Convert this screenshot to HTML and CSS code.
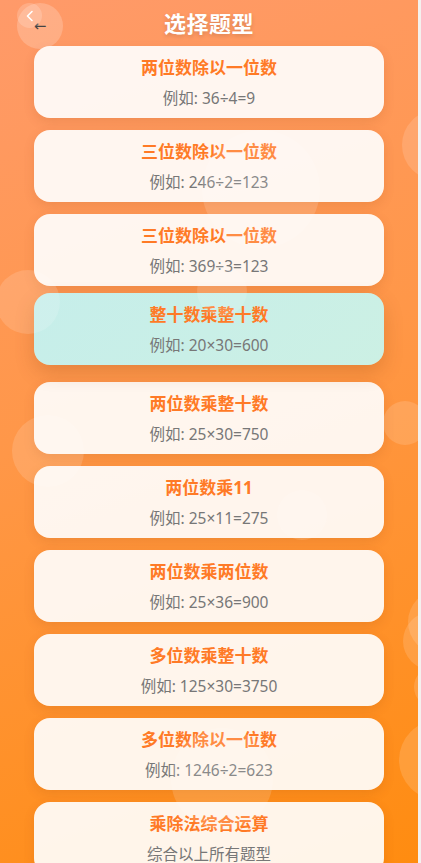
FILE: index.html
```html
<!DOCTYPE html>
<html lang="zh-CN">
<head>
  <meta charset="UTF-8">
  <meta name="viewport" content="width=device-width, initial-scale=1.0">
  <title>选择题型</title>
  <link rel="stylesheet" href="styles.css">
</head>
<body>
  <div class="page">
    <header class="top">
      <button class="back">←</button>
      <span class="nav-bubble">
        <svg width="10" height="12" viewBox="0 0 10 12"><path d="M7 1.5 L2.5 6 L7 10.5" fill="none" stroke="#fff" stroke-width="1.6" stroke-linecap="round" stroke-linejoin="round"/></svg>
      </span>
      <h1>选择题型</h1>
    </header>

    <div class="list">
      <div class="card"><div class="name">两位数除以一位数</div><div class="eg">例如: 36÷4=9</div></div>
      <div class="card"><div class="name">三位数除以一位数</div><div class="eg">例如: 246÷2=123</div></div>
      <div class="card"><div class="name">三位数除以一位数</div><div class="eg">例如: 369÷3=123</div></div>
      <div class="card active"><div class="name">整十数乘整十数</div><div class="eg">例如: 20×30=600</div></div>
      <div class="card"><div class="name">两位数乘整十数</div><div class="eg">例如: 25×30=750</div></div>
      <div class="card"><div class="name">两位数乘11</div><div class="eg">例如: 25×11=275</div></div>
      <div class="card"><div class="name">两位数乘两位数</div><div class="eg">例如: 25×36=900</div></div>
      <div class="card"><div class="name">多位数乘整十数</div><div class="eg">例如: 125×30=3750</div></div>
      <div class="card"><div class="name">多位数除以一位数</div><div class="eg">例如: 1246÷2=623</div></div>
      <div class="card"><div class="name">乘除法综合运算</div><div class="eg">综合以上所有题型</div></div>
    </div>

    <!-- decorative bubbles -->
    <span class="bubble" style="left:402px;top:110px;width:70px;height:70px"></span>
    <span class="bubble" style="left:202px;top:130px;width:118px;height:118px"></span>
    <span class="bubble" style="left:197px;top:266px;width:50px;height:50px"></span>
    <span class="bubble" style="left:-4px;top:270px;width:64px;height:64px"></span>
    <span class="bubble" style="left:12px;top:415px;width:72px;height:72px"></span>
    <span class="bubble" style="left:383px;top:401px;width:44px;height:44px"></span>
    <span class="bubble" style="left:277px;top:490px;width:50px;height:50px"></span>
    <span class="bubble" style="left:408px;top:590px;width:64px;height:64px"></span>
    <span class="bubble" style="left:403px;top:612px;width:58px;height:58px"></span>
    <span class="bubble" style="left:414px;top:667px;width:40px;height:40px"></span>
    <span class="bubble" style="left:399px;top:720px;width:80px;height:80px"></span>
    <span class="bubble" style="left:171px;top:728px;width:102px;height:102px"></span>
  </div>
</body>
</html>
```

FILE: styles.css
```css
* { box-sizing: border-box; }
html { background: #f4f1ee; }
body {
  margin: 0;
  font-family: "Noto Sans", "Noto Sans CJK SC", sans-serif;
}
.page {
  position: relative;
  width: 418px;
  height: 863px;
  overflow: hidden;
  background: linear-gradient(160deg, #ff9a6a 0%, #ff9748 45%, #ff8c10 100%);
}
.top {
  position: relative;
  height: 46px;
  display: flex;
  align-items: center;
  justify-content: center;
}
.top h1 {
  margin: 0;
  font-size: 22px;
  line-height: 1;
  font-weight: 700;
  color: #fff;
  letter-spacing: 0.5px;
  text-shadow: 0 2px 4px rgba(0,0,0,0.15);
}
.back {
  position: absolute;
  left: 17px;
  top: 3px;
  width: 46px;
  height: 46px;
  border: none;
  border-radius: 50%;
  background: rgba(255,255,255,0.2);
  color: #444;
  font-size: 15px;
  line-height: 46px;
  padding: 0;
  font-family: "DejaVu Sans", sans-serif;
}
.nav-bubble {
  position: absolute;
  left: 17px;
  top: 3px;
  width: 25px;
  height: 25px;
  border-radius: 50%;
  background: rgba(255,255,255,0.18);
  display: flex;
  align-items: center;
  justify-content: center;
}
.list {
  display: flex;
  flex-direction: column;
  gap: 12px;
  padding: 0 34px;
}
.card {
  height: 72px;
  padding: 10px 16px 0;
  border-radius: 16px;
  background: rgba(255,255,255,0.91);
  box-shadow: 0 4px 12px rgba(120,50,0,0.12);
  text-align: center;
}
.card.active {
  background: linear-gradient(135deg, #c6eeea 0%, #ccf0e4 100%);
  transform: translateY(-5px);
  box-shadow: 0 8px 20px rgba(120,50,0,0.2);
}
.name {
  font-size: 17px;
  line-height: 24px;
  font-weight: 700;
  color: #ff7a26;
}
.eg {
  margin-top: 7px;
  font-size: 15.5px;
  line-height: 22px;
  color: #777;
}
.bubble {
  position: absolute;
  border-radius: 50%;
  background: rgba(255,255,255,0.14);
  pointer-events: none;
}
```
